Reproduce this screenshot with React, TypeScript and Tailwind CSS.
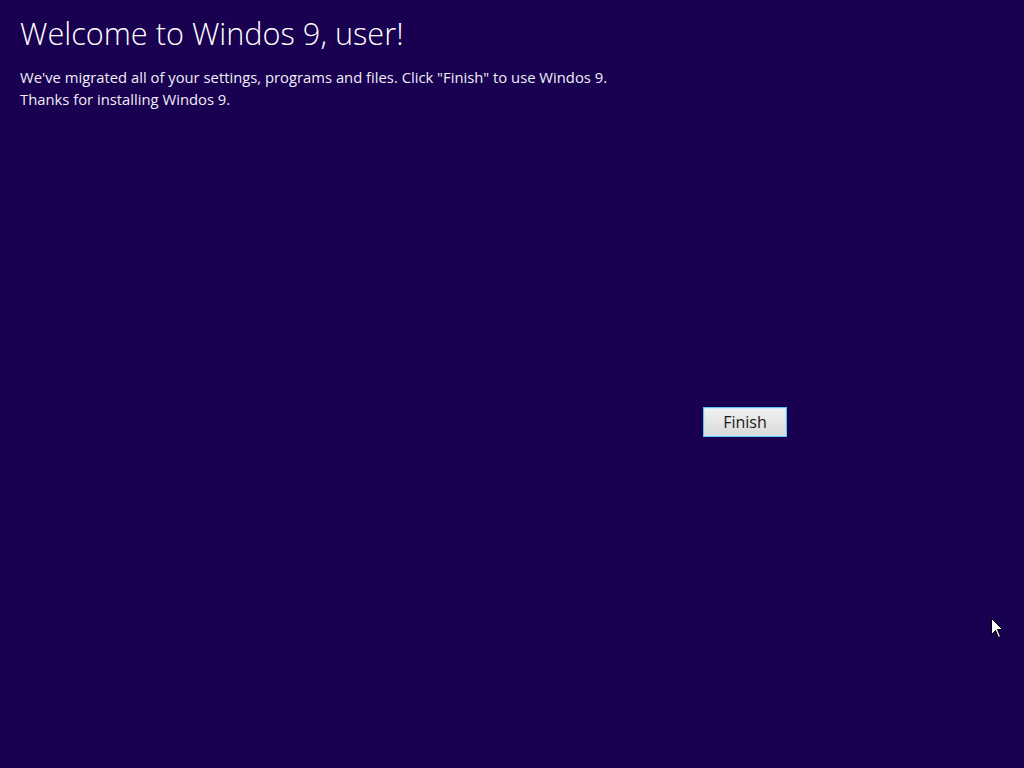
export default function App() {
  return (
    <div className="relative w-[1024px] h-[768px] overflow-hidden bg-[#190050] text-white" style={{ fontFamily: '"Open Sans", "Noto Sans", sans-serif' }}>
      <div className="pl-5 pt-[13px]">
        <h1 className="text-[30.7px] font-light leading-[40px]">Welcome to Windos 9, user!</h1>
        <div className="mt-[13px] text-[14.8px] leading-[22px] text-[#f0eef8]">
          <p>We've migrated all of your settings, programs and files. Click "Finish" to use Windos 9.</p>
          <p>Thanks for installing Windos 9.</p>
        </div>
      </div>
      <div className="pl-[703px] pt-[297px]">
        <button className="w-[84px] h-[30px] border border-[#5ec3ee] bg-gradient-to-b from-[#f2f2f2] to-[#d9d9d9] text-[16px] text-[#1a1a1a] leading-none shadow-[inset_0_0_0_1px_#c9eaf8]">
          Finish
        </button>
      </div>
      <svg className="absolute left-[991px] top-[618px]" width="13" height="21" viewBox="0 0 13 21">
        <path d="M0.5 0.5 L0.5 16.5 L4.5 12.5 L7.5 19.5 L9.5 18.5 L6.5 11.5 L11.5 11.5 Z" fill="#ffffff" stroke="#000000" strokeWidth="1" />
      </svg>
    </div>
  );
}
